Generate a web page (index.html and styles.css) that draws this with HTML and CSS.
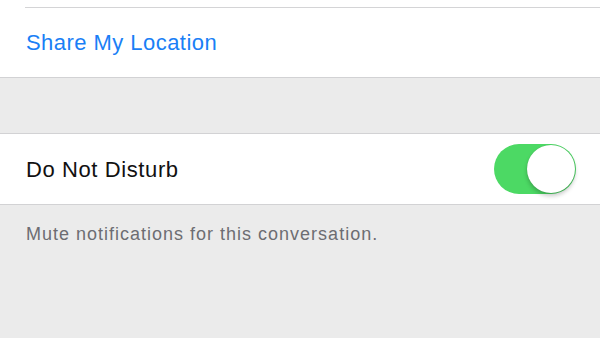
FILE: index.html
```html
<!DOCTYPE html>
<html lang="en">

<head>
    <meta charset="UTF-8">
    <meta name="viewport" content="width=device-width, initial-scale=1.0">
    <title>Details</title>
    <link rel="stylesheet" href="styles.css">
</head>

<body>
    <section class="group group-top">
        <div class="row-stub"></div>
        <div class="row">
            <a href="#" class="row-link">Share My Location</a>
        </div>
    </section>

    <div class="spacer"></div>

    <section class="group">
        <div class="row">
            <span class="row-label">Do Not Disturb</span>
            <label class="switch on">
                <span class="switch-knob"></span>
            </label>
        </div>
    </section>

    <p class="footer-note">Mute notifications for this conversation.</p>
</body>

</html>
```

FILE: styles.css
```css
body {
    margin: 0;
    background-color: #ebebeb;
    font-family: 'Liberation Sans', Arial, sans-serif;
}

.group {
    background-color: #fff;
    border-top: 1px solid #d2d2d4;
    border-bottom: 1px solid #d2d2d4;
}

.group-top {
    border-top: none;
}

.row-stub {
    height: 7px;
    margin-left: 25px;
    border-bottom: 1px solid #d4d4d6;
}

.row {
    height: 69px;
    display: flex;
    align-items: center;
    justify-content: space-between;
    padding: 0 24px 0 26px;
}

.group:not(.group-top) .row {
    height: 70px;
}

.row-link {
    color: #1a7ff6;
    text-decoration: none;
    font-size: 22px;
    letter-spacing: 0.45px;
    padding-top: 1px;
}

.row-label {
    color: #111;
    font-size: 22px;
    letter-spacing: 0.6px;
    padding-top: 1px;
}

.spacer {
    height: 55px;
}

.switch {
    position: relative;
    width: 82px;
    height: 50px;
    border-radius: 25px;
    background-color: #e5e5ea;
}

.switch.on {
    background-color: #4cd964;
}

.switch-knob {
    position: absolute;
    top: 1px;
    right: 1px;
    width: 48px;
    height: 48px;
    border-radius: 50%;
    background-color: #fff;
    box-shadow: 0 3px 4px rgba(0, 0, 0, 0.22), 0 0 1px rgba(0, 0, 0, 0.2);
}

.footer-note {
    margin: 0;
    padding: 19px 26px 0;
    color: #6d6d72;
    font-size: 18px;
    letter-spacing: 1px;
}
```
